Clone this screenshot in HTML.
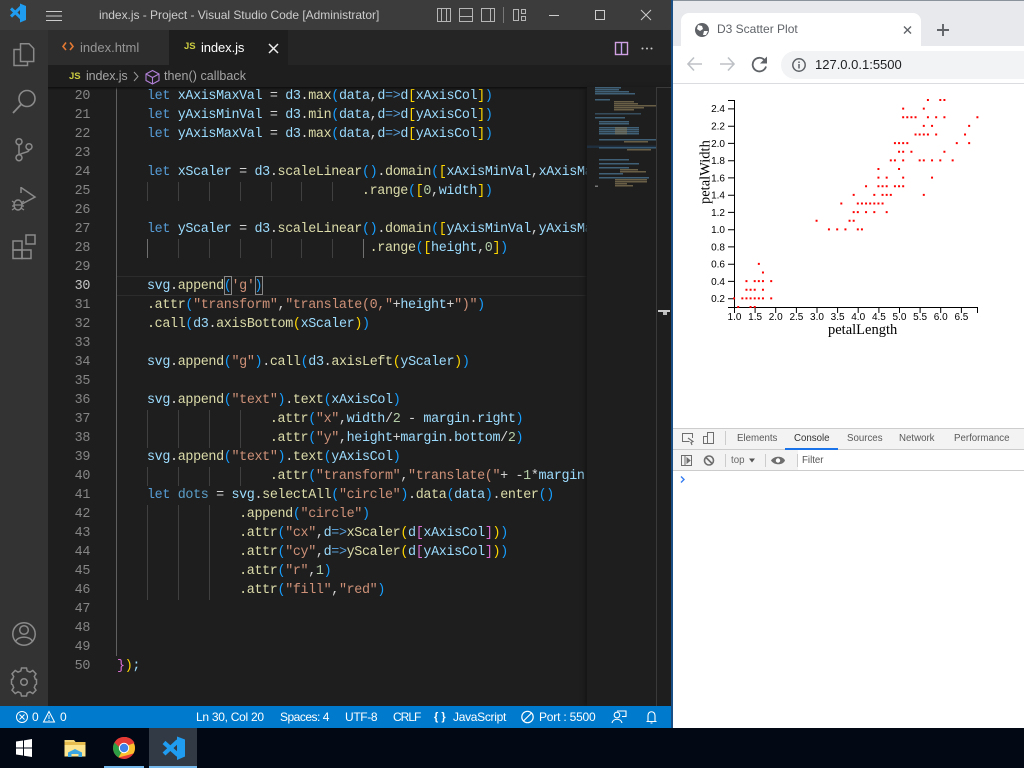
<!DOCTYPE html>
<html><head><meta charset="utf-8"><title>VS Code and D3 Scatter Plot</title>
<style>
html,body{margin:0;padding:0;width:1024px;height:768px;overflow:hidden;background:#000}
*{box-sizing:border-box}
.a{position:absolute}
body{font-family:"Liberation Sans",Arial,sans-serif;position:relative}
.t{position:absolute;white-space:pre}
#code{position:absolute;left:48px;top:87px;width:539px;height:619px;overflow:hidden;background:#1e1e1e}
.l{position:absolute;left:68.300px;white-space:pre;font:13.4px/19px "Liberation Mono",monospace;letter-spacing:-.36px;color:#d4d4d4;height:19px}
.n{position:absolute;left:0;width:42px;text-align:right;font:13.4px/19px "Liberation Mono",monospace;letter-spacing:-.36px;color:#858585;height:19px}
.k{color:#569cd6}.v{color:#9cdcfe}.c{color:#4fc1ff}.f{color:#dcdcaa}.s{color:#ce9178}.m{color:#b5cea8}
.g{color:#ffd700}.b{color:#179fff}.p{color:#da70d6}
.sb{color:#fff;font-size:12px;line-height:22px;top:706px}
.dt{font-size:9.7px;color:#5a5a5a;top:433px;line-height:12px}
</style></head><body>

<!-- VS Code frame -->
<div class="a" style="left:0;top:0;width:672px;height:30px;background:#3c3c3c"></div>
<div class="a" style="left:0;top:30px;width:48px;height:676px;background:#333"></div>
<div class="a" style="left:48px;top:30px;width:624px;height:35px;background:#252526"></div>
<div class="a" style="left:48px;top:30px;width:121px;height:35px;background:#2d2d2d"></div>
<div class="a" style="left:169px;top:30px;width:119px;height:35px;background:#1e1e1e"></div>
<div class="a" style="left:48px;top:65px;width:624px;height:22px;background:#1e1e1e"></div>

<!-- Title bar -->
<svg class="a" style="left:0;top:0" width="672" height="30" fill="none">
 <path d="M20 3.500L26 6V20L20 22.500Z" fill="#1f9cf0"/>
 <path d="M21 7L11 16.500M11 8.500L21 18" stroke="#1f9cf0" stroke-width="3"/>
 <path d="M46 11.5H62M46 16H62M46 20.5H62" stroke="#ccc" stroke-width="1"/>
 <g stroke="#b5b5b5" stroke-width="1">
  <rect x="437.5" y="8.5" width="13" height="13"/><path d="M441.5 8.5V21.5"/><path d="M446.5 8.5V21.5"/>
  <rect x="459.5" y="8.5" width="13" height="13"/><path d="M459.5 16.5H472.5"/>
  <rect x="481.5" y="8.5" width="13" height="13"/><path d="M490.5 8.5V21.5"/>
  <path d="M503.5 7V23" stroke="#777"/>
  <rect x="513.5" y="9.5" width="5" height="11"/><rect x="521.5" y="9.5" width="4" height="4"/><rect x="521.5" y="16.5" width="4" height="4"/>
 </g>
 <path d="M549 15.5H559" stroke="#ccc"/>
 <rect x="595.5" y="10.5" width="9" height="9" stroke="#ccc"/>
 <path d="M641 10L651 20M651 10L641 20" stroke="#ccc"/>
</svg>
<div class="t" style="left:99px;top:8px;font-size:12px;line-height:15px;color:#ccc;letter-spacing:-.03px">index.js - Project - Visual Studio Code [Administrator]</div>

<!-- Activity bar -->
<svg class="a" style="left:0;top:30px" width="48" height="676" fill="none" stroke="#8a8a8a" stroke-width="1.5">
 <path d="M20.5 13.700H29L33.700 18.500V31.500H20.500Z"/>
 <path d="M20.5 19.5H14V35.5H27.5V31.5"/>
 <circle cx="27" cy="68.500" r="8" stroke-width="1.6"/>
 <path d="M21 74.500L13 83" stroke-width="1.8"/>
 <circle cx="19" cy="111.700" r="3"/><circle cx="19" cy="127.700" r="3"/><circle cx="29" cy="116.700" r="3"/>
 <path d="M19 114.700V124.700M29 119.700C29 123 22 122 19.500 125"/>
 <path d="M21 157.500L35 167L22 174"/>
 <path d="M21 157V163"/>
 <ellipse cx="18" cy="175" rx="4" ry="5"/>
 <path d="M12 171L15 173M12 176H14M12 180L15 178M24 171L21 173M24 176H22M24 180L21 178M14 175H22" stroke-width="1.2"/>
 <rect x="13" y="211" width="9" height="9"/><rect x="13" y="220" width="9" height="8.500"/><rect x="22" y="220" width="9" height="8.500"/>
 <rect x="26" y="205" width="9" height="9"/>
 <circle cx="24" cy="604" r="11.2" stroke-width="1.5"/>
 <circle cx="24" cy="600" r="4.3" stroke-width="1.5"/>
 <path d="M15.5 612C17 605.5 31 605.5 32.5 612" stroke-width="1.5"/>
 <g transform="translate(0 -3)">
 <path d="M21.5 641H26.5L27.2 644L30 645.2L32.8 643.5L36 646.8L34.3 649.5L35.4 652.3L36.5 652.5V657L35.4 657.7L34.3 660.5L36 663.2L32.8 666.5L30 664.8L27.2 666L26.5 669H21.5L20.8 666L18 664.8L15.2 666.5L12 663.2L13.7 660.5L12.6 657.7L11.5 657V652.5L12.6 652.3L13.7 649.5L12 646.8L15.2 643.5L18 645.2L20.8 644Z" stroke-width="1.5"/>
 <circle cx="24" cy="655" r="3.3" stroke-width="1.5"/>
 </g>
</svg>

<!-- Tabs -->
<svg class="a" style="left:60px;top:40px" width="16" height="14" fill="none" stroke="#e37933" stroke-width="1.6"><path d="M6 2.5L3 6.5L6 10M10 2.5L13 6.5L10 10"/></svg>
<div class="t" style="left:80px;top:40px;font-size:13px;line-height:16px;color:#969696">index.html</div>
<div class="t" style="left:184px;top:41px;font-size:9.5px;line-height:12px;color:#cbcb41;font-weight:bold">JS</div>
<div class="t" style="left:201px;top:40px;font-size:13px;line-height:16px;color:#fff;letter-spacing:-.1px">index.js</div>
<svg class="a" style="left:268px;top:43px" width="12" height="12" fill="none" stroke="#eee" stroke-width="1.5"><path d="M1 1L10 10M10 1L1 10"/></svg>
<svg class="a" style="left:612px;top:38px" width="48" height="20" fill="none"><rect x="3.5" y="4.5" width="12" height="12" stroke="#d0a0e0" stroke-width="1.4"/><path d="M9.5 4.5V16.5" stroke="#c6a0f0" stroke-width="1.4"/><circle cx="30.5" cy="10.5" r="1" fill="#ccc"/><circle cx="35" cy="10.5" r="1" fill="#ccc"/><circle cx="39.5" cy="10.5" r="1" fill="#ccc"/></svg>

<!-- Breadcrumb -->
<div class="t" style="left:69px;top:71px;font-size:9.5px;line-height:12px;color:#cbcb41;font-weight:bold">JS</div>
<div class="t" style="left:86px;top:69px;font-size:12.5px;line-height:15px;color:#a5a5a5;letter-spacing:-.1px">index.js</div>
<svg class="a" style="left:132px;top:69px" width="32" height="16" fill="none"><path d="M2 3L6 7.5L2 12" stroke="#999"/><path d="M20.5 1.5L27 5V11.500L20.5 15L14 11.500V5ZM14 5L20.5 8.5L27 5M20.5 8.5V15" stroke="#b180d7" stroke-width="1.1"/></svg>
<div class="t" style="left:164px;top:69px;font-size:12.5px;line-height:15px;color:#a5a5a5;letter-spacing:.05px">then() callback</div>

<!-- Editor -->
<div id="code">
<div class="a" style="left:68px;top:189px;width:471px;height:20px;border-top:1px solid #2c2c2c;border-bottom:1px solid #2c2c2c"></div>
<!-- active indent guide -->
<div class="a" style="left:68px;top:0;width:1px;height:569px;background:#606060"></div>
<!-- indent guides -->
<div class="a" style="left:99px;top:95px;width:1px;height:19px;background:#404040"></div>
<div class="a" style="left:130px;top:95px;width:1px;height:19px;background:#404040"></div>
<div class="a" style="left:161px;top:95px;width:1px;height:19px;background:#404040"></div>
<div class="a" style="left:192px;top:95px;width:1px;height:19px;background:#404040"></div>
<div class="a" style="left:223px;top:95px;width:1px;height:19px;background:#404040"></div>
<div class="a" style="left:253px;top:95px;width:1px;height:19px;background:#404040"></div>
<div class="a" style="left:284px;top:95px;width:1px;height:19px;background:#404040"></div>
<div class="a" style="left:99px;top:152px;width:1px;height:19px;background:#707070"></div>
<div class="a" style="left:130px;top:152px;width:1px;height:19px;background:#404040"></div>
<div class="a" style="left:161px;top:152px;width:1px;height:19px;background:#404040"></div>
<div class="a" style="left:192px;top:152px;width:1px;height:19px;background:#404040"></div>
<div class="a" style="left:223px;top:152px;width:1px;height:19px;background:#404040"></div>
<div class="a" style="left:253px;top:152px;width:1px;height:19px;background:#404040"></div>
<div class="a" style="left:284px;top:152px;width:1px;height:19px;background:#404040"></div>
<div class="a" style="left:315px;top:152px;width:1px;height:19px;background:#707070"></div>
<div class="a" style="left:99px;top:323px;width:1px;height:38px;background:#404040"></div>
<div class="a" style="left:130px;top:323px;width:1px;height:38px;background:#404040"></div>
<div class="a" style="left:161px;top:323px;width:1px;height:38px;background:#404040"></div>
<div class="a" style="left:192px;top:323px;width:1px;height:38px;background:#404040"></div>
<div class="a" style="left:99px;top:380px;width:1px;height:19px;background:#404040"></div>
<div class="a" style="left:130px;top:380px;width:1px;height:19px;background:#404040"></div>
<div class="a" style="left:161px;top:380px;width:1px;height:19px;background:#404040"></div>
<div class="a" style="left:192px;top:380px;width:1px;height:19px;background:#404040"></div>
<div class="a" style="left:99px;top:418px;width:1px;height:95px;background:#404040"></div>
<div class="a" style="left:130px;top:418px;width:1px;height:95px;background:#404040"></div>
<div class="a" style="left:161px;top:418px;width:1px;height:95px;background:#404040"></div>
<!-- bracket match boxes -->
<div class="a" style="left:176px;top:189px;width:8px;height:19px;border:1px solid #888"></div>
<div class="a" style="left:207px;top:189px;width:8px;height:19px;border:1px solid #888"></div>

<div class="n" style="top:0">20</div><div class="n" style="top:19px">21</div><div class="n" style="top:38px">22</div><div class="n" style="top:57px">23</div><div class="n" style="top:76px">24</div><div class="n" style="top:95px">25</div><div class="n" style="top:114px">26</div><div class="n" style="top:133px">27</div><div class="n" style="top:152px">28</div><div class="n" style="top:171px">29</div><div class="n" style="top:190px;color:#c6c6c6">30</div><div class="n" style="top:209px">31</div><div class="n" style="top:228px">32</div><div class="n" style="top:247px">33</div><div class="n" style="top:266px">34</div><div class="n" style="top:285px">35</div><div class="n" style="top:304px">36</div><div class="n" style="top:323px">37</div><div class="n" style="top:342px">38</div><div class="n" style="top:361px">39</div><div class="n" style="top:380px">40</div><div class="n" style="top:399px">41</div><div class="n" style="top:418px">42</div><div class="n" style="top:437px">43</div><div class="n" style="top:456px">44</div><div class="n" style="top:475px">45</div><div class="n" style="top:494px">46</div><div class="n" style="top:513px">47</div><div class="n" style="top:532px">48</div><div class="n" style="top:551px">49</div><div class="n" style="top:570px">50</div>

<div class="l" style="top:0">    <span class="k">let</span> <span class="v">xAxisMaxVal</span> = <span class="v">d3</span>.<span class="f">max</span><span class="b">(</span><span class="v">data</span>,<span class="v">d</span><span class="k">=&gt;</span><span class="v">d</span><span class="g">[</span><span class="v">xAxisCol</span><span class="g">]</span><span class="b">)</span></div>
<div class="l" style="top:19px">    <span class="k">let</span> <span class="v">yAxisMinVal</span> = <span class="v">d3</span>.<span class="f">min</span><span class="b">(</span><span class="v">data</span>,<span class="v">d</span><span class="k">=&gt;</span><span class="v">d</span><span class="g">[</span><span class="v">yAxisCol</span><span class="g">]</span><span class="b">)</span></div>
<div class="l" style="top:38px">    <span class="k">let</span> <span class="v">yAxisMaxVal</span> = <span class="v">d3</span>.<span class="f">max</span><span class="b">(</span><span class="v">data</span>,<span class="v">d</span><span class="k">=&gt;</span><span class="v">d</span><span class="g">[</span><span class="v">yAxisCol</span><span class="g">]</span><span class="b">)</span></div>
<div class="l" style="top:76px">    <span class="k">let</span> <span class="v">xScaler</span> = <span class="v">d3</span>.<span class="f">scaleLinear</span><span class="b">()</span>.<span class="f">domain</span><span class="b">(</span><span class="g">[</span><span class="v">xAxisMinVal</span>,<span class="v">xAxisMaxVal</span><span class="g">]</span><span class="b">)</span></div>
<div class="l" style="top:95px">                                <span class="f">.range</span><span class="b">(</span><span class="g">[</span><span class="m">0</span>,<span class="v">width</span><span class="g">]</span><span class="b">)</span></div>
<div class="l" style="top:133px">    <span class="k">let</span> <span class="v">yScaler</span> = <span class="v">d3</span>.<span class="f">scaleLinear</span><span class="b">()</span>.<span class="f">domain</span><span class="b">(</span><span class="g">[</span><span class="v">yAxisMinVal</span>,<span class="v">yAxisMaxVal</span><span class="g">]</span><span class="b">)</span></div>
<div class="l" style="top:152px">                                 <span class="f">.range</span><span class="b">(</span><span class="g">[</span><span class="v">height</span>,<span class="m">0</span><span class="g">]</span><span class="b">)</span></div>
<div class="l" style="top:190px">    <span class="v">svg</span>.<span class="f">append</span><span class="b">(</span><span class="s">'g'</span><span class="b">)</span></div>
<div class="l" style="top:209px">    <span class="f">.attr</span><span class="b">(</span><span class="s">"transform"</span>,<span class="s">"translate(0,"</span>+<span class="v">height</span>+<span class="s">")"</span><span class="b">)</span></div>
<div class="l" style="top:228px">    <span class="f">.call</span><span class="b">(</span><span class="v">d3</span>.<span class="f">axisBottom</span><span class="g">(</span><span class="v">xScaler</span><span class="g">)</span><span class="b">)</span></div>
<div class="l" style="top:266px">    <span class="v">svg</span>.<span class="f">append</span><span class="b">(</span><span class="s">"g"</span><span class="b">)</span>.<span class="f">call</span><span class="b">(</span><span class="v">d3</span>.<span class="f">axisLeft</span><span class="g">(</span><span class="v">yScaler</span><span class="g">)</span><span class="b">)</span></div>
<div class="l" style="top:304px">    <span class="v">svg</span>.<span class="f">append</span><span class="b">(</span><span class="s">"text"</span><span class="b">)</span>.<span class="f">text</span><span class="b">(</span><span class="v">xAxisCol</span><span class="b">)</span></div>
<div class="l" style="top:323px">                    <span class="f">.attr</span><span class="b">(</span><span class="s">"x"</span>,<span class="v">width</span>/<span class="m">2</span> - <span class="v">margin</span>.<span class="v">right</span><span class="b">)</span></div>
<div class="l" style="top:342px">                    <span class="f">.attr</span><span class="b">(</span><span class="s">"y"</span>,<span class="v">height</span>+<span class="v">margin</span>.<span class="v">bottom</span>/<span class="m">2</span><span class="b">)</span></div>
<div class="l" style="top:361px">    <span class="v">svg</span>.<span class="f">append</span><span class="b">(</span><span class="s">"text"</span><span class="b">)</span>.<span class="f">text</span><span class="b">(</span><span class="v">yAxisCol</span><span class="b">)</span></div>
<div class="l" style="top:380px">                    <span class="f">.attr</span><span class="b">(</span><span class="s">"transform"</span>,<span class="s">"translate("</span>+ -<span class="m">1</span>*<span class="v">margin</span>.<span class="v">left</span></div>
<div class="l" style="top:399px">    <span class="k">let</span> <span class="c" style="color:#5b9fc9">dots</span> = <span class="v">svg</span>.<span class="f">selectAll</span><span class="b">(</span><span class="s">"circle"</span><span class="b">)</span>.<span class="f">data</span><span class="b">(</span><span class="v">data</span><span class="b">)</span>.<span class="f">enter</span><span class="b">()</span></div>
<div class="l" style="top:418px">                <span class="f">.append</span><span class="b">(</span><span class="s">"circle"</span><span class="b">)</span></div>
<div class="l" style="top:437px">                <span class="f">.attr</span><span class="b">(</span><span class="s">"cx"</span>,<span class="v">d</span><span class="k">=&gt;</span><span class="f">xScaler</span><span class="g">(</span><span class="v">d</span><span class="p">[</span><span class="v">xAxisCol</span><span class="p">]</span><span class="g">)</span><span class="b">)</span></div>
<div class="l" style="top:456px">                <span class="f">.attr</span><span class="b">(</span><span class="s">"cy"</span>,<span class="v">d</span><span class="k">=&gt;</span><span class="f">yScaler</span><span class="g">(</span><span class="v">d</span><span class="p">[</span><span class="v">yAxisCol</span><span class="p">]</span><span class="g">)</span><span class="b">)</span></div>
<div class="l" style="top:475px">                <span class="f">.attr</span><span class="b">(</span><span class="s">"r"</span>,<span class="m">1</span><span class="b">)</span></div>
<div class="l" style="top:494px">                <span class="f">.attr</span><span class="b">(</span><span class="s">"fill"</span>,<span class="s">"red"</span><span class="b">)</span></div>
<div class="l" style="top:570px;left:69px"><span class="p">}</span><span class="g">)</span><span class="v">;</span></div>
</div>
<div class="a" style="left:48px;top:87px;width:539px;height:3px;background:linear-gradient(#0d0d0d,rgba(30,30,30,0))"></div>

<!-- Minimap -->
<div class="a" style="left:587px;top:87px;width:85px;height:619px;background:#1e1e1e;box-shadow:-3px 0 4px -1px #141414"></div>
<svg class="a" style="left:587px;top:87px" width="85" height="619">
 <g fill="#4d7c9c" opacity=".7">
  <rect x="8" y="0" width="26" height="1.5"/><rect x="8" y="2" width="24" height="1.5"/><rect x="8" y="4" width="34" height="1.5"/><rect x="8" y="6" width="40" height="1.5"/>
  <rect x="8" y="12" width="15" height="1.5"/><rect x="8" y="26" width="46" height="1.5" opacity=".7"/><rect x="8" y="30" width="30" height="1.5"/>
  <rect x="12" y="34" width="30" height="1.5"/><rect x="12" y="36" width="30" height="1.5"/>
  <rect x="12" y="40" width="40" height="1.5"/><rect x="12" y="42" width="40" height="1.5"/><rect x="12" y="44" width="40" height="1.5"/><rect x="12" y="46" width="40" height="1.5"/>
  <rect x="12" y="52" width="57" height="1.5"/><rect x="12" y="60" width="57" height="1.5"/>
  <rect x="12" y="72" width="30" height="1.5"/><rect x="12" y="76" width="40" height="1.5"/><rect x="12" y="80" width="30" height="1.5"/>
  <rect x="12" y="86" width="24" height="1.5"/><rect x="12" y="90" width="50" height="1.5"/>
 </g>
 <g fill="#8a7a58" opacity=".7">
  <rect x="27" y="14" width="20" height="1.5"/><rect x="27" y="16" width="24" height="1.5"/><rect x="27" y="18" width="42" height="1.5"/><rect x="27" y="20" width="30" height="1.5"/><rect x="27" y="22" width="20" height="1.5"/>
  <rect x="28" y="40" width="12" height="7.5" opacity=".7"/><rect x="37" y="54" width="24" height="1.5"/><rect x="40" y="62" width="24" height="1.5"/>
  <rect x="33" y="82" width="18" height="1.5"/><rect x="33" y="84" width="26" height="1.5"/><rect x="28" y="92" width="32" height="1.5"/><rect x="28" y="94" width="32" height="1.5"/><rect x="28" y="96" width="12" height="1.5"/><rect x="28" y="98" width="18" height="1.5"/>
 </g>
 <rect x="0" y="58.5" width="69" height="2.5" fill="#264f78" opacity=".35"/>
 <rect x="8" y="98.5" width="3" height="1.5" fill="#777"/>
 <rect x="69" y="0" width="1" height="619" fill="#3a3a3a"/>
 <rect x="69" y="0" width="15" height="1" fill="#3a3a3a"/>
 <rect x="71" y="223" width="12" height="2" fill="#ccc"/>
 <rect x="76" y="225" width="4" height="3" fill="#bbb"/>
</svg>

<!-- Status bar -->
<div class="a" style="left:0;top:706px;width:672px;height:22px;background:#007acc"></div>
<svg class="a" style="left:0;top:706px" width="672" height="22" fill="none" stroke="#fff">
 <circle cx="22" cy="11" r="5.5"/><path d="M19.5 8.5L24.5 13.5M24.5 8.5L19.5 13.5"/>
 <path d="M49 5.5L54.5 16H43.5Z"/><path d="M49 9V13M49 14V15" stroke-width=".9"/>
 <circle cx="527.5" cy="11" r="5.7" stroke-width="1.2"/><path d="M523.5 15L531.5 7" stroke-width="1.2"/>
 <path d="M617 5H626V10.500H622" stroke-width="1.100"/><circle cx="617" cy="9" r="2.800" stroke-width="1.100"/><path d="M612 17C613 12 621 12 622 17" stroke-width="1.100"/>
 <path d="M648 15.5V9.5C648 4.5 655 4.5 655 9.5V15.5ZM646.5 15.5H656.5M650.5 17H652.5" stroke-width="1.1"/>
</svg>
<div class="t sb" style="left:32px">0</div>
<div class="t sb" style="left:60px">0</div>
<div class="t sb" style="left:196px;letter-spacing:-.28px">Ln 30, Col 20</div>
<div class="t sb" style="left:280px;letter-spacing:-.5px">Spaces: 4</div>
<div class="t sb" style="left:345px;letter-spacing:-.35px">UTF-8</div>
<div class="t sb" style="left:393px;letter-spacing:-1px">CRLF</div>
<div class="t sb" style="left:434px;font-weight:bold;font-size:11px">{ }</div>
<div class="t sb" style="left:453px;letter-spacing:-.3px">JavaScript</div>
<div class="t sb" style="left:539px;letter-spacing:-.2px">Port : 5500</div>

<!-- Browser -->
<div class="a" style="left:671px;top:0;width:2px;height:728px;background:#1a4f86"></div>
<div class="a" style="left:673px;top:0;width:351px;height:728px;background:#fff"></div>
<div class="a" style="left:673px;top:0;width:351px;height:1px;background:#8a929c"></div>
<div class="a" style="left:673px;top:1px;width:351px;height:45px;background:#e7e9ec"></div>
<div class="a" style="left:681px;top:13px;width:240px;height:34px;background:#fff;border-radius:8px 8px 0 0"></div>
<svg class="a" style="left:673px;top:0" width="351" height="84" fill="none">
 <circle cx="29" cy="30" r="7" fill="#5f6368"/>
 <path d="M25 25L29 26L30 29L27 31L24 29ZM31 31L35 31L33 35L30 35Z" fill="#fff"/>
 <path d="M231 26.5L238 33.5M238 26.5L231 33.5" stroke="#5f6368" stroke-width="1.4"/>
 <path d="M270 24V36M264 30H276" stroke="#5f6368" stroke-width="1.9"/>
 <path d="M29 64H15M21 57.5L15 64L21 70.5" stroke="#bdc1c6" stroke-width="1.6"/>
 <path d="M47 64H61M55 57.5L61 64L55 70.5" stroke="#bdc1c6" stroke-width="1.6"/>
 <path d="M91.500 60A6.800 6.800 0 1 0 93 66.500" stroke="#5f6368" stroke-width="1.8"/>
 <path d="M94 56.500V63.500H87Z" fill="#5f6368"/>
</svg>
<div class="t" style="left:717px;top:22px;font-size:12px;line-height:15px;color:#5f6368">D3 Scatter Plot</div>
<div class="a" style="left:781px;top:51px;width:243px;height:28px;background:#f1f3f4;border-radius:14px 0 0 14px"></div>
<svg class="a" style="left:790px;top:56px" width="18" height="18" fill="none"><circle cx="9" cy="9" r="6.2" stroke="#5f6368" stroke-width="1.5"/><path d="M9 8V12.5M9 5.5V7" stroke="#5f6368" stroke-width="1.5"/></svg>
<div class="t" style="left:815px;top:57px;font-size:13px;line-height:16px;color:#202124">127.0.0.1:5500</div>
<div class="a" style="left:673px;top:83px;width:351px;height:1px;background:#dadce0"></div>

<!-- Chart -->
<svg class="a" style="left:673px;top:84px" width="351" height="344" viewBox="673 84 351 344" font-family="Liberation Sans, Arial, sans-serif" font-size="10" fill="#000">
 <path d="M728 100.5H734.5V307.5H728M734.5 313V307.5H977.5V313" fill="none" stroke="#000"/>
 <g stroke="#000" fill="none">
  <path d="M728 108.9h6M728 126.2h6M728 143.4h6M728 160.7h6M728 177.9h6M728 195.2h6M728 212.4h6M728 229.7h6M728 246.9h6M728 264.2h6M728 281.4h6M728 298.7h6"/>
  <path d="M755.1 307v6M775.7 307v6M796.4 307v6M817 307v6M837.6 307v6M858.2 307v6M878.9 307v6M899.5 307v6M920.1 307v6M940.7 307v6M961.4 307v6"/>
 </g>
 <g text-anchor="end">
  <text x="725" y="112">2.4</text><text x="725" y="129.6">2.2</text><text x="725" y="146.8">2.0</text><text x="725" y="164">1.8</text><text x="725" y="181.3">1.6</text><text x="725" y="198.5">1.4</text><text x="725" y="215.8">1.2</text><text x="725" y="233">1.0</text><text x="725" y="250.3">0.8</text><text x="725" y="267.5">0.6</text><text x="725" y="284.8">0.4</text><text x="725" y="302">0.2</text>
 </g>
 <g text-anchor="middle">
  <text x="734.5" y="320">1.0</text><text x="755.1" y="320">1.5</text><text x="775.7" y="320">2.0</text><text x="796.4" y="320">2.5</text><text x="817" y="320">3.0</text><text x="837.6" y="320">3.5</text><text x="858.2" y="320">4.0</text><text x="878.9" y="320">4.5</text><text x="899.5" y="320">5.0</text><text x="920.1" y="320">5.5</text><text x="940.7" y="320">6.0</text><text x="961.4" y="320">6.5</text>
 </g>
 <text x="828" y="334" font-family="Liberation Serif, serif" font-size="14.5">petalLength</text>
 <text transform="translate(709.5 204) rotate(-90)" font-family="Liberation Serif, serif" font-size="14.5">petalWidth</text>
 <path transform="translate(691.86 315.625) scale(4.124 -8.625)" fill="none" stroke="#f00" stroke-width=".23" d="M10 2h.48M11 1h.48M12 2h.48M13 2h.48M13 3h.48M13 4h.48M14 1h.48M14 2h.48M14 3h.48M15 1h.48M15 2h.48M15 3h.48M15 4h.48M16 2h.48M16 4h.48M16 6h.48M17 2h.48M17 3h.48M17 4h.48M17 5h.48M19 2h.48M19 4h.48M47 14h.48M45 15h.48M49 15h.48M40 13h.48M46 15h.48M45 13h.48M47 16h.48M33 10h.48M46 13h.48M39 14h.48M35 10h.48M42 15h.48M40 10h.48M36 13h.48M44 14h.48M41 10h.48M39 11h.48M48 18h.48M47 12h.48M43 13h.48M48 14h.48M50 17h.48M38 11h.48M37 10h.48M39 12h.48M51 16h.48M45 16h.48M47 15h.48M44 13h.48M41 13h.48M44 12h.48M46 14h.48M40 12h.48M42 13h.48M42 12h.48M30 11h.48M60 25h.48M51 19h.48M59 21h.48M56 18h.48M58 22h.48M66 21h.48M45 17h.48M63 18h.48M58 18h.48M61 25h.48M51 20h.48M53 19h.48M55 21h.48M50 20h.48M51 24h.48M53 23h.48M55 18h.48M67 22h.48M69 23h.48M50 15h.48M57 23h.48M49 20h.48M67 20h.48M49 18h.48M57 21h.48M60 18h.48M56 21h.48M58 16h.48M61 19h.48M64 20h.48M56 22h.48M51 15h.48M56 14h.48M61 23h.48M56 24h.48M54 21h.48M51 23h.48M59 23h.48M57 25h.48M52 23h.48M50 19h.48M52 20h.48M54 23h.48M51 18h.48"/>
</svg>

<!-- Devtools -->
<div class="a" style="left:673px;top:428px;width:351px;height:1px;background:#cdcdcd"></div>
<div class="a" style="left:673px;top:429px;width:351px;height:20px;background:#f3f3f3"></div>
<div class="a" style="left:673px;top:449px;width:351px;height:1px;background:#ccc"></div>
<div class="a" style="left:785px;top:448px;width:53px;height:2px;background:#1a73e8"></div>
<div class="a" style="left:673px;top:450px;width:351px;height:20px;background:#f3f3f3"></div>
<div class="a" style="left:798px;top:450px;width:226px;height:20px;background:#fff"></div>
<div class="a" style="left:673px;top:470px;width:351px;height:1px;background:#ccc"></div>
<svg class="a" style="left:673px;top:429px" width="351" height="42" fill="none" stroke="#6e6e6e">
 <path d="M16.5 12.5H9.5V4.5H19.5V9"/><path d="M15 9L20 12.5L18 13.5L19 16" stroke-width="1.2"/>
 <rect x="34.5" y="3.5" width="6" height="11"/><rect x="30.5" y="7.5" width="4" height="7"/>
 <path d="M52.5 2V16" stroke="#ccc"/>
 <rect x="8.5" y="26.5" width="10" height="10"/><path d="M12 26.5V36.5"/><path d="M14 29L17 31.5L14 34Z" fill="#6e6e6e"/>
 <circle cx="36" cy="31.5" r="4.5" stroke-width="1.6"/><path d="M33 28.5L39 34.5" stroke-width="1.6"/>
 <path d="M52.5 25V38M92.5 25V38M124.5 25V38" stroke="#ccc"/>
 <path d="M98 31.5C101 26.5 110 26.5 112 31.5C110 36.5 101 36.5 98 31.5Z" fill="#6e6e6e" stroke="none"/><circle cx="105" cy="31.5" r="2.2" fill="#fff" stroke="none"/>
 <path d="M76 29.5H82L79 33.5Z" fill="#555" stroke="none"/>
</svg>
<div class="t dt" style="left:737px">Elements</div>
<div class="t dt" style="left:794px;color:#333">Console</div>
<div class="t dt" style="left:847px">Sources</div>
<div class="t dt" style="left:899px">Network</div>
<div class="t dt" style="left:954px">Performance</div>
<div class="t" style="left:731px;top:455px;font-size:9.7px;line-height:12px;color:#666">top</div>
<div class="t" style="left:802px;top:455px;font-size:9.7px;line-height:12px;color:#555">Filter</div>
<svg class="a" style="left:678px;top:474px" width="10" height="10" fill="none"><path d="M3 2.5L6 5.5L3 8.5" stroke="#367cf1" stroke-width="1.4"/></svg>

<!-- Taskbar -->
<div class="a" style="left:0;top:728px;width:1024px;height:40px;background:#020814"></div>
<div class="a" style="left:149px;top:728px;width:48px;height:40px;background:#323a46"></div>
<div class="a" style="left:149px;top:766px;width:48px;height:2px;background:#76b9ed"></div>
<div class="a" style="left:104px;top:766px;width:40px;height:2px;background:#76b9ed"></div>
<svg class="a" style="left:0;top:728px" width="200" height="40">
 <path d="M16 13.5L23 12.5V19.5H16ZM24 12.4L32 11V19.5H24ZM16 20.5H23V27.5L16 26.5ZM24 20.5H32V29L24 27.7Z" fill="#fff"/>
 <path d="M64.500 12H74L76 14.5H85.500V28.500H64.500Z" fill="#f3d57a"/>
 <rect x="64.500" y="14" width="21" height="3" fill="#e8bd4f"/>
 <rect x="64.500" y="17" width="21" height="11.500" fill="#fde58f"/>
 <path d="M68 29V24.500L75 21L82 24.500V29H78.500V26H71.500V29Z" fill="#3aa5e0"/>
 <circle cx="124" cy="20" r="11" fill="#e53935"/>
 <path d="M124 20L114.500 14.500A11 11 0 0 0 118.500 29.500Z" fill="#2e9e44"/>
 <path d="M124 9A11 11 0 0 1 133.500 25.500L118.500 29.500L124 20Z" fill="#fbc02d"/>
 <path d="M124 9A11 11 0 0 0 114.500 14.500L120 20L134.500 15A11 11 0 0 0 124 9Z" fill="#e53935"/>
 <circle cx="124" cy="20" r="5.200" fill="#fff"/><circle cx="124" cy="20" r="4.200" fill="#3f7fe8"/>
 <path d="M177 8.500L185 11.500V28.500L177 32Z" fill="#1f9cf0"/>
 <path d="M178 13L164 26M164 14.500L178 27" stroke="#1f9cf0" stroke-width="4.200" fill="none"/>
</svg>
</body></html>
